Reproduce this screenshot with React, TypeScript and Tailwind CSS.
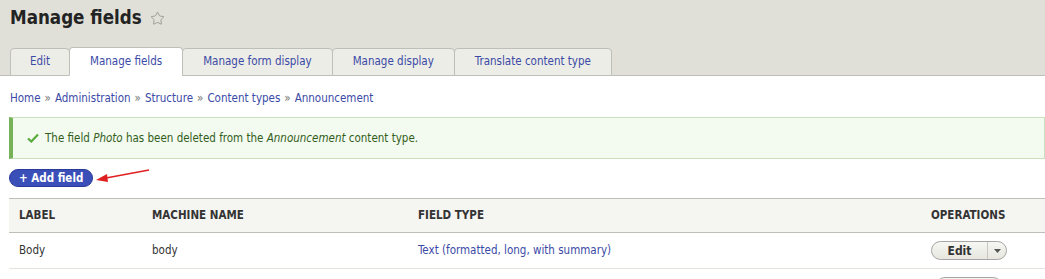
import { Star } from 'lucide-react';

const tabs = ['Edit', 'Manage fields', 'Manage form display', 'Manage display', 'Translate content type'];
const crumbs = ['Home', 'Administration', 'Structure', 'Content types', 'Announcement'];

const App = () => {
  return (
    <div className="w-[1045px] h-[279px] overflow-hidden bg-white text-[#333] font-['DejaVu_Sans_Condensed','DejaVu_Sans',sans-serif] [font-stretch:condensed]">
      <div className="bg-[#e0e0d8] border-b border-[#bfbfba] pt-[5px] pl-[10px]">
        <h1 className="flex items-center gap-[8px] text-[18.6px] font-bold leading-[26px] text-[#232323]">
          Manage fields
          <Star className="w-[15px] h-[15px] text-[#8a8a80]" strokeWidth={1.2} />
        </h1>
        <ul className="flex mt-[17px] -mb-px">
          {tabs.map((t, i) => {
            const active = i === 1;
            return (
              <li
                key={t}
                className={
                  active
                    ? 'px-[20px] flex items-center text-[11.5px] text-[#3b4aa6] bg-white border border-[#bfbfba] border-b-white rounded-t-[4px] -mt-px -ml-px h-[29px]'
                    : 'h-[28px] px-[20px] first:px-[19px] flex items-center text-[11.5px] text-[#3b4aa6] bg-[#ededE7] border border-[#bfbfba] rounded-t-[4px] -ml-px first:ml-0'
                }
              >
                {t}
              </li>
            );
          })}
        </ul>
      </div>

      <div className="px-[10px] pt-[14px] text-[11.5px] text-[#3b4aa6] flex gap-[4px]">
        {crumbs.map((c, i) => (
          <span key={c} className="flex gap-[4px]">
            {i > 0 && <span className="text-[#777]">»</span>}
            <span>{c}</span>
          </span>
        ))}
      </div>

      <div className="ml-[9px] mt-[10px] h-[42px] flex items-center bg-[#f3faef] border border-[#c9e1bd] border-l-[4px] border-l-[#77b259] pl-[14px] text-[11.5px] text-[#325e1c]">
        <svg width="12" height="10" viewBox="0 0 12 10" className="mr-[6px]">
          <path d="M1 5.5 L4.3 8.5 L11 1.5" fill="none" stroke="#5aaa3e" strokeWidth="2.2" />
        </svg>
        <span>
          The field <em>Photo</em> has been deleted from the <em>Announcement</em> content type.
        </span>
      </div>

      <div className="flex items-center mt-[10px] ml-[9px] relative">
        <span className="h-[18px] px-[9px] flex items-center rounded-full bg-[#3a4fb8] border border-[#2a3a9a] text-white text-[11.5px] font-bold">
          + Add field
        </span>
        <svg width="60" height="16" viewBox="0 0 60 16" className="ml-[1px] -mt-[4px]">
          <line x1="55" y1="2" x2="12" y2="10" stroke="#e02020" strokeWidth="1.6" />
          <path d="M2 12 L13 6 L14 14 Z" fill="#e02020" />
        </svg>
      </div>

      <table className="ml-[9px] mt-[11px] w-[1036px] border-collapse text-[11.5px]">
        <thead>
          <tr className="bg-[#f5f5f2] border-t border-b border-[#bfbfba] h-[34px] text-left text-[11.5px] font-bold uppercase text-[#333]">
            <th className="pl-[10px] w-[143px] font-bold">Label</th>
            <th className="w-[266px] font-bold">Machine name</th>
            <th className="w-[513px] font-bold">Field type</th>
            <th className="font-bold">Operations</th>
          </tr>
        </thead>
        <tbody>
          <tr className="h-[36px] border-b border-[#e6e4df]">
            <td className="pl-[10px]">Body</td>
            <td>body</td>
            <td className="text-[#3b4aa6]">Text (formatted, long, with summary)</td>
            <td>
              <div className="inline-flex h-[19px] w-[76px] rounded-full border border-[#a6a6a6] bg-gradient-to-b from-[#f6f6f3] to-[#e7e7df] text-[12px] font-bold text-[#333]">
                <span className="flex-1 flex items-center justify-center">Edit</span>
                <span className="w-[19px] border-l border-[#c8c8c0] flex items-center justify-center">
                  <svg width="7" height="4" viewBox="0 0 7 4">
                    <path d="M0 0 L7 0 L3.5 4 Z" fill="#555" />
                  </svg>
                </span>
              </div>
            </td>
          </tr>
          <tr className="h-[36px]">
            <td className="pl-[10px]"></td>
            <td></td>
            <td></td>
            <td className="align-top pt-[8px]">
              <div className="ml-[4px] h-[19px] w-[68px] rounded-t-[10px] border border-[#a6a6a6] bg-[#f2f2ee]" />
            </td>
          </tr>
        </tbody>
      </table>
    </div>
  );
};

export default App;
